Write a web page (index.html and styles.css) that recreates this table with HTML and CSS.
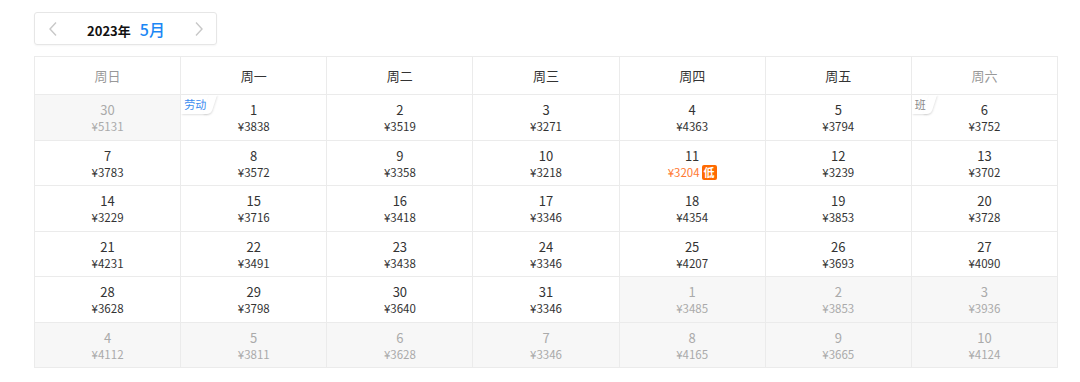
FILE: index.html
```html
<!DOCTYPE html>
<html lang="zh">
<head>
<meta charset="utf-8">
<link rel="stylesheet" href="styles.css">
</head>
<body>
<div class="page">
  <div class="switcher">
    <span class="arrow"><svg width="10" height="16" viewBox="0 0 10 16"><path d="M8 1.5 2 8l6 6.5" fill="none" stroke="#c8c8c8" stroke-width="1.4"/></svg></span>
    <span class="title"><b class="year">2023年</b><span class="month">5月</span></span>
    <span class="arrow"><svg width="10" height="16" viewBox="0 0 10 16"><path d="M2 1.5 8 8l-6 6.5" fill="none" stroke="#c8c8c8" stroke-width="1.4"/></svg></span>
  </div>
  <table class="cal">
    <thead>
      <tr><th class="wk">周日</th><th>周一</th><th>周二</th><th>周三</th><th>周四</th><th>周五</th><th class="wk">周六</th></tr>
    </thead>
    <tbody>
      <tr>
        <td class="off"><div class="d">30</div><div class="p">¥5131</div></td>
        <td><span class="tag hol">劳动</span><div class="d">1</div><div class="p">¥3838</div></td>
        <td><div class="d">2</div><div class="p">¥3519</div></td>
        <td><div class="d">3</div><div class="p">¥3271</div></td>
        <td><div class="d">4</div><div class="p">¥4363</div></td>
        <td><div class="d">5</div><div class="p">¥3794</div></td>
        <td><span class="tag work">班</span><div class="d">6</div><div class="p">¥3752</div></td>
      </tr>
      <tr>
        <td><div class="d">7</div><div class="p">¥3783</div></td>
        <td><div class="d">8</div><div class="p">¥3572</div></td>
        <td><div class="d">9</div><div class="p">¥3358</div></td>
        <td><div class="d">10</div><div class="p">¥3218</div></td>
        <td><div class="d">11</div><div class="p low">¥3204<span class="lowtag">低</span></div></td>
        <td><div class="d">12</div><div class="p">¥3239</div></td>
        <td><div class="d">13</div><div class="p">¥3702</div></td>
      </tr>
      <tr>
        <td><div class="d">14</div><div class="p">¥3229</div></td>
        <td><div class="d">15</div><div class="p">¥3716</div></td>
        <td><div class="d">16</div><div class="p">¥3418</div></td>
        <td><div class="d">17</div><div class="p">¥3346</div></td>
        <td><div class="d">18</div><div class="p">¥4354</div></td>
        <td><div class="d">19</div><div class="p">¥3853</div></td>
        <td><div class="d">20</div><div class="p">¥3728</div></td>
      </tr>
      <tr>
        <td><div class="d">21</div><div class="p">¥4231</div></td>
        <td><div class="d">22</div><div class="p">¥3491</div></td>
        <td><div class="d">23</div><div class="p">¥3438</div></td>
        <td><div class="d">24</div><div class="p">¥3346</div></td>
        <td><div class="d">25</div><div class="p">¥4207</div></td>
        <td><div class="d">26</div><div class="p">¥3693</div></td>
        <td><div class="d">27</div><div class="p">¥4090</div></td>
      </tr>
      <tr>
        <td><div class="d">28</div><div class="p">¥3628</div></td>
        <td><div class="d">29</div><div class="p">¥3798</div></td>
        <td><div class="d">30</div><div class="p">¥3640</div></td>
        <td><div class="d">31</div><div class="p">¥3346</div></td>
        <td class="off"><div class="d">1</div><div class="p">¥3485</div></td>
        <td class="off"><div class="d">2</div><div class="p">¥3853</div></td>
        <td class="off"><div class="d">3</div><div class="p">¥3936</div></td>
      </tr>
      <tr>
        <td class="off"><div class="d">4</div><div class="p">¥4112</div></td>
        <td class="off"><div class="d">5</div><div class="p">¥3811</div></td>
        <td class="off"><div class="d">6</div><div class="p">¥3628</div></td>
        <td class="off"><div class="d">7</div><div class="p">¥3346</div></td>
        <td class="off"><div class="d">8</div><div class="p">¥4165</div></td>
        <td class="off"><div class="d">9</div><div class="p">¥3665</div></td>
        <td class="off"><div class="d">10</div><div class="p">¥4124</div></td>
      </tr>
    </tbody>
  </table>
</div>
</body>
</html>
```
FILE: styles.css
```css
* { box-sizing: border-box; }
html, body { margin: 0; padding: 0; background: #fff; }
body {
  font-family: "Noto Sans CJK SC", "Noto Sans", sans-serif;
  color: #333;
}
.page { padding: 12px 0 0 34px; }
.switcher {
  width: 183px;
  height: 33px;
  border: 1px solid #e6e6e6;
  border-radius: 3px;
  display: flex;
  align-items: center;
  justify-content: space-between;
  padding: 0 12px 0 13px;
  box-shadow: 0 1px 2px rgba(0,0,0,0.04);
}
.arrow { display: flex; align-items: center; }
.title { display: flex; align-items: baseline; gap: 9px; line-height: 1; }
.year { font-size: 13px; font-weight: 700; color: #111; }
.month { font-size: 16px; font-weight: 500; color: #1b87f5; }
.cal {
  margin-top: 11px;
  border-collapse: collapse;
  table-layout: fixed;
  width: 1024px;
}
.cal th, .cal td {
  border: 1px solid #ebebeb;
  text-align: center;
  padding: 0;
  position: relative;
}
.cal th {
  height: 38px;
  font-size: 13px;
  font-weight: 400;
  color: #333;
}
.cal th.wk { color: #999; }
.cal td { height: 45.5px; vertical-align: middle; padding-top: 2px; }
.d { font-size: 13px; line-height: 17px; color: #333; }
.p { font-size: 11.5px; line-height: 17px; color: #333; display: flex; justify-content: center; align-items: center; gap: 2px; }
.cal td.off { background: #f7f7f7; }
.cal td.off .d, .cal td.off .p { color: #aaa; }
.p.low { color: #ff7a33; }
.lowtag {
  display: inline-flex;
  align-items: center;
  justify-content: center;
  width: 15px;
  height: 15px;
  background: #ff6a00;
  color: #fff;
  font-size: 11px;
  font-weight: 700;
  border-radius: 2px;
  line-height: 1;
}
.tag {
  position: absolute;
  left: 0;
  top: 0;
  height: 19px;
  padding: 0 4px 0 3px;
  font-size: 11px;
  line-height: 18px;
  background: #fff;
  border-bottom-right-radius: 5px;
  box-shadow: 1px 1px 2px rgba(0,0,0,0.12);
  z-index: 1;
}
.tag::after {
  content: "";
  position: absolute;
  top: 0;
  right: -4px;
  width: 8px;
  height: 19px;
  background: #fff;
  transform: skewX(-18deg);
  border-bottom-right-radius: 4px;
  box-shadow: 1px 1px 2px rgba(0,0,0,0.1);
  z-index: -1;
}
.tag.hol { color: #3b8cf0; }
.tag.work { color: #888; }
```
